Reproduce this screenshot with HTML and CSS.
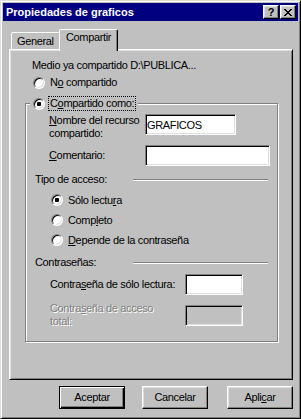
FILE: index.html
```html
<!DOCTYPE html>
<html lang="es">
<head>
  <meta charset="UTF-8" />
  <title>Propiedades de graficos</title>
  <link rel="stylesheet" href="styles.css">
</head>
<body>
  <div class="window">
    <div class="titlebar">
      <span class="title">Propiedades de graficos</span>
      <button class="cap-btn help">?</button>
      <button class="cap-btn close">
        <svg width="8" height="7" viewBox="0 0 8 7" shape-rendering="crispEdges"><path d="M0 0h2v1H0zM6 0h2v1H6zM1 1h2v1H1zM5 1h2v1H5zM2 2h4v1H2zM3 3h2v1H3zM2 4h4v1H2zM1 5h2v1H1zM5 5h2v1H5zM0 6h2v1H0zM6 6h2v1H6z"/></svg>
      </button>
    </div>

    <div class="tabs">
      <div class="tab">General</div>
      <div class="tab active">Compartir</div>
    </div>

    <div class="sheet">
      <div class="info">Medio ya compartido D:\PUBLICA...</div>
      <label class="option not-shared">
        <input type="radio" name="share" class="radio">
        <span class="caption">N<u>o</u> compartido</span>
      </label>

      <div class="group">
        <label class="option legend">
          <input type="radio" name="share" class="radio" checked>
          <span class="caption focus">C<u>o</u>mpartido como:</span>
        </label>

        <div class="field name-row">
          <span>
            <span class="line"><u>N</u>ombre del recurso</span>
            <span class="line">compartido:</span>
          </span>
          <input class="edit name-input" value="GRAFICOS">
        </div>
        <div class="field comment-row">
          <span><u>C</u>omentario:</span>
          <input class="edit comment-input" value="">
        </div>

        <div class="separator">
          <span>Tipo de acceso:</span>
          <span class="rule"></span>
        </div>
        <div class="choices">
          <label class="option">
            <input type="radio" name="access" class="radio" checked>
            <span class="caption">Sólo lectu<u>r</u>a</span>
          </label>
          <label class="option">
            <input type="radio" name="access" class="radio">
            <span class="caption">Comp<u>l</u>eto</span>
          </label>
          <label class="option">
            <input type="radio" name="access" class="radio">
            <span class="caption"><u>D</u>epende de la contraseña</span>
          </label>
        </div>

        <div class="separator passwords">
          <span>Contraseñas:</span>
          <span class="rule"></span>
        </div>
        <div class="field pwd-row">
          <span>Contra<u>s</u>eña de sólo lectura:</span>
          <input class="edit pwd-input" value="">
        </div>
        <div class="field pwd-row off">
          <span>
            <span class="line">Contra<u>s</u>eña de acceso</span>
            <span class="line">total:</span>
          </span>
          <input class="edit pwd-input" value="" disabled>
        </div>
      </div>
    </div>

    <div class="actions">
      <button class="btn default">Aceptar</button>
      <button class="btn cancel">Cancelar</button>
      <button class="btn apply">Apli<u>c</u>ar</button>
    </div>
  </div>
</body>
</html>
```

FILE: styles.css
```css
* {
  box-sizing: border-box;
}

body {
  margin: 0;
  background: #c0c0c0;
  font-family: "Liberation Sans", Arial, sans-serif;
  font-size: 11px;
  line-height: 13px;
  letter-spacing: -0.35px;
  color: #000;
}

button,
input {
  font: inherit;
  letter-spacing: inherit;
  color: #000;
}

.window {
  width: 301px;
  height: 419px;
  padding: 2px;
  border: 1px solid;
  border-color: #dfdfdf #000 #000 #dfdfdf;
  box-shadow: inset 1px 1px #fff, inset -1px -1px #808080;
  display: flex;
  flex-direction: column;
}

/* caption */
.titlebar {
  height: 18px;
  background: #000080;
  color: #fff;
  display: flex;
  align-items: center;
  padding: 0 2px 0 3px;
}

.title {
  flex: 1;
  font-weight: bold;
  letter-spacing: 0;
}

.cap-btn {
  width: 16px;
  height: 14px;
  padding: 0;
  border: 1px solid;
  border-color: #fff #000 #000 #fff;
  box-shadow: inset -1px -1px #808080, inset 1px 1px #dfdfdf;
  background: #c0c0c0;
  display: flex;
  align-items: center;
  justify-content: center;
  font-weight: bold;
  letter-spacing: 0;
}

.close {
  margin-left: 1px;
}

/* tabs */
.tabs {
  display: flex;
  align-items: flex-end;
  height: 22px;
  margin: 8px 5px -2px 8px;
  position: relative;
  z-index: 1;
}

.tab {
  width: 50px;
  height: 17px;
  margin-bottom: 2px;
  padding: 2px 0 0 5px;
  border: 1px solid;
  border-bottom: 0;
  border-color: #fff #000 transparent #fff;
  border-radius: 2px 2px 0 0;
  box-shadow: inset -1px 0 #808080;
  background: #c0c0c0;
}

.tab.active {
  width: 59px;
  height: 22px;
  margin-left: -2px;
  margin-bottom: 0;
  padding: 1px 0 0 6px;
}

.sheet {
  height: 331px;
  margin: 0 5px 0 6px;
  padding: 9px 14px 0 15px;
  border: 1px solid;
  border-color: #fff #000 #000 #fff;
  box-shadow: inset 1px 1px #dfdfdf, inset -1px -1px #808080;
}

.info {
  padding-left: 7px;
}

/* radios */
.option {
  display: flex;
  align-items: center;
}

.not-shared {
  margin-top: 3px;
  padding-left: 8px;
}

.radio {
  appearance: none;
  margin: 0;
  flex: none;
  width: 12px;
  height: 12px;
  border-radius: 50%;
  border: 1px solid;
  border-color: #808080 #fff #fff #808080;
  box-shadow: inset 1px 1px #000, inset -1px -1px #dfdfdf;
  background: #fff;
}

.radio:checked {
  background: radial-gradient(circle, #000 0 2px, #fff 2.5px);
}

.caption {
  margin-left: 3px;
  padding: 0 1px;
  border: 1px solid transparent;
}

.caption.focus {
  border: 1px dotted #000;
}

/* group box */
.group {
  margin-top: 13px;
  padding: 0 9px 13px;
  border: 1px solid #808080;
  box-shadow: inset 1px 1px #fff, 1px 1px #fff;
  display: flex;
  flex-direction: column;
}

.legend {
  align-self: flex-start;
  margin: -8px 0 0 -5px;
  padding: 0 2px 0 3px;
  background: #c0c0c0;
}

.field {
  display: grid;
  grid-template-columns: 96px auto;
  padding-left: 14px;
}

.line {
  display: block;
}

.name-row {
  margin-top: 3px;
  align-items: start;
}

.comment-row {
  margin-top: 5px;
  align-items: center;
}

.edit {
  appearance: none;
  height: 21px;
  margin: 0;
  padding: 0 0 0 1px;
  border: 1px solid;
  border-color: #808080 #fff #fff #808080;
  box-shadow: inset 1px 1px #000, inset -1px -1px #dfdfdf;
  background: #fff;
  outline: none;
}

.edit:disabled {
  background: #c0c0c0;
}

.name-input {
  width: 91px;
}

.comment-input {
  width: 125px;
}

.separator {
  display: grid;
  grid-template-columns: 98px 1fr;
  margin-top: 7px;
}

.separator.passwords {
  margin-top: 6px;
}

.rule {
  align-self: start;
  height: 2px;
  margin-top: 6px;
  border-top: 1px solid #808080;
  border-bottom: 1px solid #fff;
}

.choices {
  margin-top: 4px;
  padding-left: 16px;
}

.choices .option {
  height: 20px;
}

.pwd-row {
  grid-template-columns: 135px auto;
  padding-left: 15px;
  margin-top: 5px;
  align-items: center;
}

.pwd-row.off {
  margin-top: 7px;
  align-items: start;
  color: #808080;
  text-shadow: 1px 1px 0 #fff;
}

.pwd-row.off .edit {
  margin-top: 3px;
}

.pwd-input {
  width: 58px;
}

/* buttons */
.actions {
  display: flex;
  justify-content: flex-end;
  margin: 6px 5px 0 0;
}

.btn {
  width: 66px;
  height: 23px;
  padding: 0;
  border: 1px solid;
  border-color: #fff #000 #000 #fff;
  box-shadow: inset -1px -1px #808080, inset 1px 1px #dfdfdf;
  background: #c0c0c0;
}

.btn.default {
  border-color: #000;
  box-shadow: inset 1px 1px #fff, inset -1px -1px #000, inset -2px -2px #808080;
}

.btn.cancel {
  margin-left: 17px;
}

.btn.apply {
  margin-left: 19px;
}
```
